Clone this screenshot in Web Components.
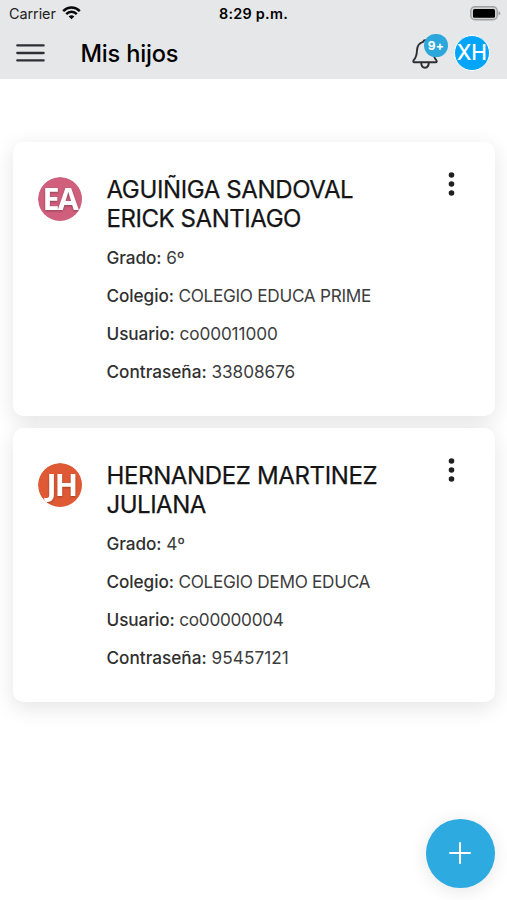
<!DOCTYPE html>
<html lang="es">
<head>
<meta charset="utf-8">
<title>Mis hijos</title>
<style>
html,body{margin:0;height:100%}
body{background:#fff;font-family:Inter,"Liberation Sans",sans-serif;color:#000;overflow:hidden}
</style>
</head>
<body>
<app-screen>
  <status-bar slot="header"></status-bar>
  <app-toolbar slot="header">Mis hijos</app-toolbar>
  <child-card initials="EA" x="21.8" color="#cf5f7c" style="--ls1:-.37px;--ls2:-.44px">
    <span slot="name">AGUIÑIGA SANDOVAL</span><span slot="name2">ERICK SANTIAGO</span>
    <info-row label="Grado:">6º</info-row>
    <info-row label="Colegio:" style="--v:-.29px">COLEGIO EDUCA PRIME</info-row>
    <info-row label="Usuario:" style="--v:-.1px">co00011000</info-row>
    <info-row label="Contraseña:" style="--v:-.05px;--l:0px">33808676</info-row>
  </child-card>
  <child-card initials="JH" x="23.3" color="#df5a34" style="--ls1:-.36px;--ls2:-.5px">
    <span slot="name">HERNANDEZ MARTINEZ</span><span slot="name2">JULIANA</span>
    <info-row label="Grado:">4º</info-row>
    <info-row label="Colegio:" style="--v:-.29px">COLEGIO DEMO EDUCA</info-row>
    <info-row label="Usuario:" style="--v:-.28px">co00000004</info-row>
    <info-row label="Contraseña:" style="--v:.05px;--l:0px">95457121</info-row>
  </child-card>
  <fab-button slot="fab"></fab-button>
</app-screen>
<script>
const define = (name, html, setup) => customElements.define(name, class extends HTMLElement {
  constructor() {
    super();
    this.attachShadow({mode: 'open'}).innerHTML = html;
  }
  connectedCallback() { if (setup) setup(this, this.shadowRoot); }
});

define('app-screen', `
<style>
:host{display:block;position:relative;width:507px;height:900px;overflow:hidden}
header{height:79px;background:#e6e7e9}
main{display:flex;flex-direction:column;gap:12.4px;padding:63px 12.5px 0 13px}
.fab{position:absolute;right:12.5px;bottom:12.5px}
</style>
<header><slot name="header"></slot></header>
<main><slot></slot></main>
<div class="fab"><slot name="fab"></slot></div>`);

define('status-bar', `
<style>
:host{display:grid;grid-template-columns:1fr auto 1fr;align-items:center;height:27px;padding:0 6px 0 9px}
.l{display:flex;align-items:center;gap:6px;font-size:14.4px;color:#222;letter-spacing:-.05px}
.l svg{margin-top:-1px}
.c{font-size:14.4px;font-weight:600;letter-spacing:.25px;margin-right:3px}
.r{display:flex;justify-content:flex-end}
svg{display:block}
</style>
<div class="l"><span>Carrier</span>
<svg width="19" height="14" viewBox="0 0 19 14" fill="none" stroke="#080808" stroke-width="2.5"><path d="M1.2 5.1C5.9 .4 13.1 .4 17.8 5.1"/><path d="M4.2 8.1C7.2 5.1 11.8 5.1 14.8 8.1"/><path d="M6.7 10.5Q9.5 8.2 12.3 10.5L9.5 13.3Z" fill="#080808" stroke="none"/></svg></div>
<div class="c">8:29 p.m.</div>
<div class="r"><svg width="31" height="15" viewBox="0 0 31 15"><rect x=".8" y=".8" width="26.4" height="13" rx="4" fill="#d2d2d2" stroke="#a2a2a3" stroke-width="1.4"/><rect x="3" y="3" width="22" height="8.8" rx="1.6" fill="#000"/><path d="M28.4 5.2Q30.4 5.8 30.4 7.3T28.4 9.4Z" fill="#a2a2a3"/></svg></div>`);

define('app-toolbar', `
<style>
:host{display:flex;align-items:center;height:51px;padding:0 17.2px 0 16px}
svg{display:block}
h1{margin:2px 0 0 35.5px;flex:1;font-size:23.6px;line-height:30px;font-weight:500;letter-spacing:-.2px}
.bell{position:relative;width:42px;height:36px}
.bell svg{margin:4px 0 0}
.badge{position:absolute;left:12.5px;top:-.5px;width:23.4px;height:23.4px;border-radius:50%;background:#2ba7dc;color:#fff;font-size:12px;line-height:23.4px;font-weight:700;text-align:center;letter-spacing:.3px}
.av{width:36px;height:36px;border-radius:50%;background:#03a5fb;border:1.3px solid #fff;box-sizing:border-box;color:#fff;font-size:21px;line-height:33.4px;display:flex;justify-content:center;letter-spacing:-.2px;font-weight:500}
</style>
<svg width="29" height="18" viewBox="0 0 29 18" stroke="#2d2f35" stroke-width="2.3" stroke-linecap="round"><path d="M1.3 1.4H27.6M1.3 9H27.6M1.3 16.4H27.6"/></svg>
<h1><slot></slot></h1>
<div class="bell"><svg width="27" height="31" viewBox="0 0 27 31" fill="none" stroke="#2d2f35" stroke-width="1.9" stroke-linejoin="round" stroke-linecap="round"><path d="M13 1.3C12 1.3 11.4 2 11.2 2.9C7.2 3.9 5.2 7.2 5 11.3C4.8 16 4.2 18.6 1.7 21.2C.9 22.3 1.2 23.3 2.4 23.3H23.6C24.8 23.3 25.1 22.3 24.3 21.2C21.8 18.6 21.2 16 21 11.3C20.8 7.2 18.8 3.9 14.8 2.9C14.6 2 14 1.3 13 1.3Z"/><path d="M9.2 23.6C9.2 30.4 16.8 30.4 16.8 23.6"/></svg><span class="badge">9+</span></div>
<div class="av">XH</div>`);

define('child-card', `
<style>
:host{display:grid;grid-template-columns:44.5px 1fr 12px;column-gap:24.5px;height:273.8px;box-sizing:border-box;padding:32px 37.5px 0 24.5px;background:#fff;border-radius:10.5px;box-shadow:0 5.4px 21.6px rgba(0,0,0,.11)}
.av{width:44.5px;height:44.5px;margin-top:2.5px;border-radius:50%;overflow:hidden;color:#fff}
svg{display:block}
text{font:700 30.5px "Open Sans",sans-serif}
h2{margin:1px 0 0;font-size:24px;line-height:29.3px;font-weight:400;color:#151515;white-space:nowrap;-webkit-text-stroke:.25px #151515}
.a,.b{display:block}
.a{letter-spacing:var(--ls1)}
.b{letter-spacing:var(--ls2)}
.rows{display:flex;flex-direction:column;gap:14px;margin-top:12.5px}
.more{margin-top:-3px}
</style>
<div class="av"><svg width="44.5" height="44.5" viewBox="0 0 44.5 44.5"><circle cx="22.25" cy="22.25" r="22.25"/><text y="33.2" text-anchor="middle" fill="#fff" style="filter:drop-shadow(0 1px 1px rgba(0,0,0,.3))"></text></svg></div>
<div><h2><span class="a"><slot name="name"></slot></span><span class="b"><slot name="name2"></slot></span></h2><div class="rows"><slot></slot></div></div>
<svg class="more" width="12" height="26" viewBox="0 0 12 26" fill="#202020"><circle cx="6.5" cy="4" r="2.8"/><circle cx="6.5" cy="13" r="2.8"/><circle cx="6.5" cy="22" r="2.8"/></svg>`,
(el, root) => {
  root.querySelector('circle').setAttribute('fill', el.getAttribute('color'));
  const t = root.querySelector('text');
  t.textContent = el.getAttribute('initials');
  t.setAttribute('x', el.getAttribute('x'));
  t.setAttribute('letter-spacing', '-1.8');
});

define('info-row', `
<style>
:host{display:block;font-size:17.2px;line-height:24px;color:#3d3d3d;white-space:nowrap;letter-spacing:var(--v,-.1px)}
b{font-weight:500;color:#303030;letter-spacing:var(--l,-.08px)}
</style><b></b> <slot></slot>`,
(el, root) => { root.querySelector('b').textContent = el.getAttribute('label'); });

define('fab-button', `
<style>
:host{display:grid;place-items:center;width:68.5px;height:68.5px;border-radius:50%;background:#2dabe0;box-shadow:0 3px 18px rgba(0,0,0,.1)}
svg{display:block}
</style>
<svg width="22" height="22" viewBox="0 0 22 22" stroke="#fff" stroke-width="2" stroke-linecap="round"><path d="M11 1V21M1 11H21"/></svg>`);
</script>
</body>
</html>
